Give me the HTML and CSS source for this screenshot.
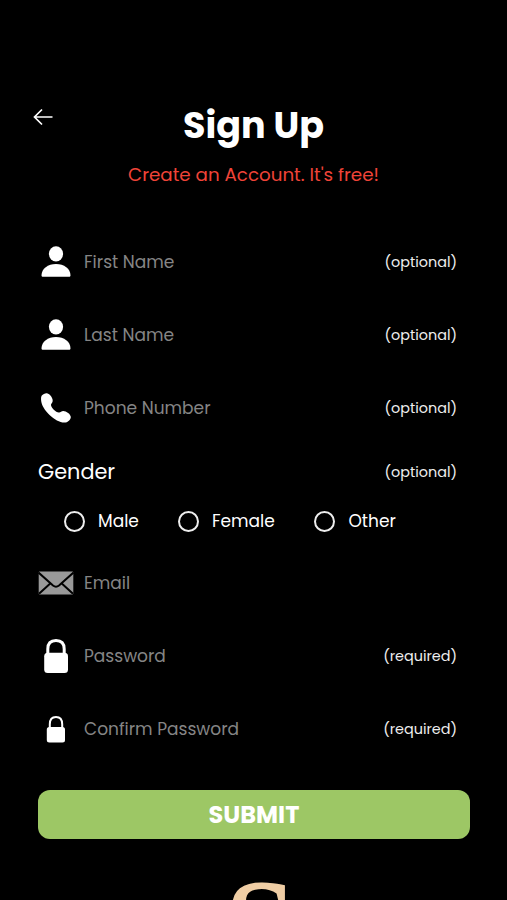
FILE: index.html
```html
<!DOCTYPE html>
<html lang="en">
<head>
<meta charset="utf-8">
<title>Sign Up</title>
<link rel="stylesheet" href="styles.css">
</head>
<body>
<svg width="0" height="0" class="defs" aria-hidden="true">
  <symbol id="user" viewBox="0 0 36 36"><ellipse cx="18" cy="9.800" rx="7.100" ry="7.600"/><path d="M3.500 31.200C3.500 24.700 10 19.900 18 19.900s14.500 4.800 14.500 11.300c0 1-.6 1.500-1.500 1.500H5c-.9 0-1.500-.5-1.500-1.500z"/></symbol>
</svg>
<main class="screen">
  <header class="header">
    <a class="back" href="#" aria-label="Back"><svg width="20" height="18" viewBox="0 0 20 18"><path d="M9 1.500 1.500 9 9 16.500M1.500 9H19.500" fill="none" stroke="#fff" stroke-width="1.700"/></svg></a>
    <h1 class="title">Sign Up</h1>
  </header>
  <p class="subtitle">Create an Account. It's free!</p>
  <form class="form">
    <div class="row"><svg class="icon"><use href="#user"/></svg><label class="field">First Name</label><span class="note">(optional)</span></div>
    <div class="row"><svg class="icon"><use href="#user"/></svg><label class="field">Last Name</label><span class="note">(optional)</span></div>
    <div class="row"><svg class="icon" viewBox="0 0 36 36"><path d="M3.800 5.600C5 4 7.500 3 9 3.300c3 .6 6 5 5.700 7.600-.2 1.800-1.700 2.700-1.700 4 0 2.800 4.900 7.300 7.800 7.600 1.800.2 2.500-1.600 4.400-1.600 3 0 7.600 3.200 7.600 6 0 2.600-2.900 5.700-6.500 5.700C17.500 32.600 3.700 20 3.100 10.300 3 8.400 3 6.700 3.800 5.600z"/></svg><label class="field">Phone Number</label><span class="note">(optional)</span></div>
    <div class="row gender"><span class="legend">Gender</span><span class="note">(optional)</span></div>
    <div class="options">
      <span class="option male"><i class="radio"></i>Male</span>
      <span class="option female"><i class="radio"></i>Female</span>
      <span class="option other"><i class="radio"></i>Other</span>
    </div>
    <div class="row email"><svg class="icon mail" viewBox="0 0 36 36"><rect x=".7" y="6.500" width="34.600" height="23" rx="1"/><path d="M.5 7.500 15 20.500q3 2.400 6 0L35.500 7.500M1 28.800 12.500 18.300M35 28.800 23.500 18.300" fill="none" stroke="#000" stroke-width="2"/></svg><label class="field">Email</label></div>
    <div class="row"><svg class="icon" viewBox="0 0 36 36"><path d="M9.800 16.500V11C9.800 5.500 12.800 2.500 18 2.500S26.200 5.500 26.200 11V16.500" fill="none" stroke="#fff" stroke-width="3"/><rect x="6.200" y="14.700" width="23.800" height="20.400" rx="3.500"/></svg><label class="field">Password</label><span class="note">(required)</span></div>
    <div class="row"><svg class="icon" viewBox="0 0 36 36"><path d="M11.800 17.500V13.300C11.800 8.800 14 6 18 6s6.200 2.800 6.200 7.300V17.500" fill="none" stroke="#fff" stroke-width="2"/><rect x="8.800" y="16" width="18.200" height="15.600" rx="2.500"/></svg><label class="field">Confirm Password</label><span class="note">(required)</span></div>
    <button class="submit" type="button">SUBMIT</button>
  </form>
  <footer class="brand"><span class="brand-letter">S</span></footer>
</main>
</body>
</html>
```
FILE: styles.css
```css
* { box-sizing: border-box; }
body { margin: 0; background: #000; }
.defs { display: block; height: 0; }
.screen {
  width: 507px; height: 900px; overflow: hidden;
  padding: 99px 37px 0; background: #000; color: #fff;
  font-family: Poppins, Inter, sans-serif;
}
.header { display: grid; grid-template-columns: 60px 1fr 60px; height: 52px; margin: 0 -4px; }
.back { padding-top: 9px; line-height: 0; }
.title { margin: 0; text-align: center; font-size: 36.500px; font-weight: 700; line-height: 54px; }
.subtitle { margin: 9px 0 0; height: 30px; line-height: 30px; text-align: center; font-size: 18.300px; color: #f04438; }
.form { display: block; padding-top: 35px; }
.row { display: flex; align-items: center; height: 73.400px; padding-right: 13px; }
.icon { flex: none; width: 36px; height: 36px; margin-left: 1px; fill: #fff; }
.field { flex: 1; margin-left: 10px; font-size: 17.050px; line-height: 26px; color: #858585; }
.note { font-size: 14.400px; line-height: 24px; color: #eee; }
.gender { height: 53px; justify-content: space-between; padding-left: 1px; }
.legend { font-size: 20.800px; }
.options { display: flex; height: 46px; padding-left: 26.500px; align-items: center; font-size: 17px; }
.option { display: flex; align-items: center; gap: 13.500px; }
.male { width: 114px; }
.female { width: 136.500px; }
.radio { flex: none; width: 21px; height: 21px; border: 2px solid #eee; border-radius: 50%; }
.email { height: 77px; margin-bottom: -2px; }
.mail { fill: #999; }
.submit {
  display: block; width: 432px; height: 49px; margin: 24px 0 0 1px; padding: 0;
  border: 0; border-radius: 12px; background: #9dc765; color: #fff;
  font: 700 24px/49px Poppins, Inter, sans-serif;
}
.brand { height: 80px; padding: 22px 0 0 14px; display: flex; justify-content: center; }
.brand-letter { display: block; font: 700 127px/127px "Liberation Serif", serif; color: #efcda4; }
```
